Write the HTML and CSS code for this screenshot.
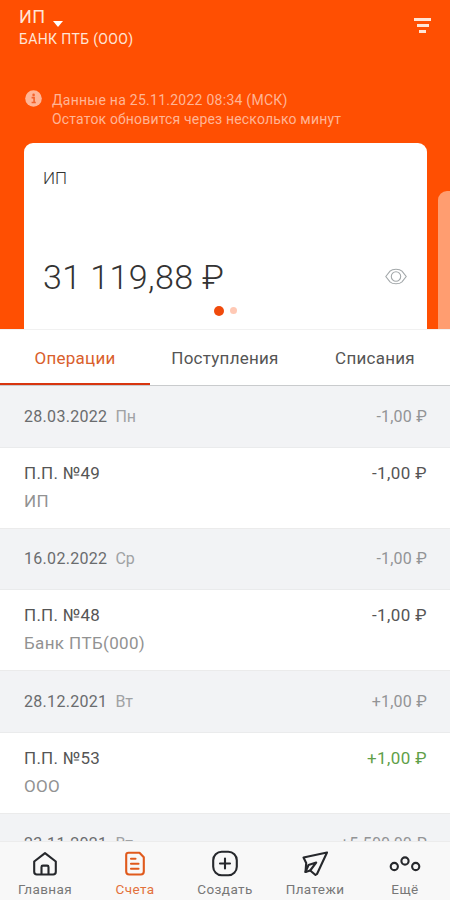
FILE: index.html
```html
<!DOCTYPE html>
<html lang="ru">
<head>
	<meta charset="utf-8">
	<meta name="viewport" content="width=device-width, initial-scale=1">
	<title>Счета</title>
	<link rel="stylesheet" href="styles.css">
</head>
<body>
	<div class="app">
		<header class="header">
			<div class="top">
				<div class="company">
					<div class="company-name"><span>ИП</span><i class="arrow"></i></div>
					<div class="bank">БАНК ПТБ (ООО)</div>
				</div>
				<div class="filter"><i></i><i></i><i></i></div>
			</div>
			<div class="notice">
				<svg width="17" height="17" viewBox="0 0 17 17">
					<circle cx="8.5" cy="8.5" r="8.3" fill="#ffb596"/>
					<circle cx="8.6" cy="4.9" r="1.3" fill="#f2622c"/>
					<path d="M6.6 7.6h2.5v4.8M6.6 12.5h4.2" fill="none" stroke="#f2622c" stroke-width="1.6"/>
				</svg>
				<div class="notice-text">
					<p class="notice-date">Данные на 25.11.2022 08:34 (МСК)</p>
					<p class="notice-rest">Остаток обновится через несколько минут</p>
				</div>
			</div>
			<div class="cards">
				<div class="card">
					<div class="card-name">ИП</div>
					<div class="card-row">
						<span class="balance">31 119,88 ₽</span>
						<svg width="22" height="17" viewBox="0 0 22 17" fill="none" stroke="#a3a8aa" stroke-width="1.1">
							<path d="M.8 8.5L5 3.200Q7 1.200 11 1.200t6 2l4.200 5.300-4.200 5.300q-2 2-6 2t-6-2z"/>
							<circle cx="11" cy="8.500" r="4.700"/>
						</svg>
					</div>
					<div class="dots"><i class="current"></i><i></i></div>
				</div>
				<div class="card-next"></div>
			</div>
		</header>

		<div class="tabs">
			<div class="tab current">Операции</div>
			<div class="tab">Поступления</div>
			<div class="tab">Списания</div>
		</div>

		<main class="list">
			<div class="day"><span class="date">28.03.2022</span><span class="week">Пн</span><span class="total">-1,00 ₽</span></div>
			<div class="item">
				<div class="item-row"><span class="doc">П.П. №49</span><span class="sum">-1,00 ₽</span></div>
				<div class="who">ИП</div>
			</div>
			<div class="day"><span class="date">16.02.2022</span><span class="week">Ср</span><span class="total">-1,00 ₽</span></div>
			<div class="item">
				<div class="item-row"><span class="doc">П.П. №48</span><span class="sum">-1,00 ₽</span></div>
				<div class="who">Банк ПТБ(000)</div>
			</div>
			<div class="day"><span class="date">28.12.2021</span><span class="week">Вт</span><span class="total">+1,00 ₽</span></div>
			<div class="item">
				<div class="item-row"><span class="doc">П.П. №53</span><span class="sum plus">+1,00 ₽</span></div>
				<div class="who">ООО</div>
			</div>
			<div class="day"><span class="date">23.11.2021</span><span class="week">Вт</span><span class="total">+5 500,00 ₽</span></div>
		</main>

		<nav class="nav">
			<div class="nav-item">
				<svg width="28" height="28" viewBox="0 0 28 28">
					<path d="M3.200 11.500L14 3.200l10.800 8.300v10.300q0 2.700-2.700 2.700H5.900q-2.700 0-2.700-2.700z"/>
					<path d="M10.500 24v-7q0-1.400 1.400-1.400h4.200q1.400 0 1.400 1.400v7"/>
				</svg>
				<span>Главная</span>
			</div>
			<div class="nav-item current">
				<svg width="28" height="28" viewBox="0 0 28 28">
					<path d="M7.500 2.700h11l4.300 4.500v14.300q0 3-3 3H8.200q-3 0-3-3V5q0-2.300 2.300-2.300z"/>
					<path d="M10 8.700H14.500M10 13.700h7.500M10 18.700h7.500"/>
				</svg>
				<span>Счета</span>
			</div>
			<div class="nav-item">
				<svg width="28" height="28" viewBox="0 0 28 28">
					<rect x="2.200" y="1.700" width="23.600" height="23.600" rx="8.500"/>
					<path d="M14 8.500v10M9 13.500h10"/>
				</svg>
				<span>Создать</span>
			</div>
			<div class="nav-item">
				<svg width="28" height="28" viewBox="0 0 28 28">
					<path d="M26 2.500L2.500 7.500 5.200 13 4.500 22l4.700-1.500 5.300 4.500 1.500-1z"/>
					<path d="M4.500 22l3-7L15.200 12.500 9.200 20.500"/>
				</svg>
				<span>Платежи</span>
			</div>
			<div class="nav-item">
				<svg width="32" height="28" viewBox="0 0 32 28">
					<circle cx="5.300" cy="16.500" r="3.600"/>
					<circle cx="16" cy="11" r="3.600"/>
					<circle cx="26.700" cy="16.500" r="3.600"/>
				</svg>
				<span>Ещё</span>
			</div>
		</nav>
	</div>
</body>
</html>
```

FILE: styles.css
```css
* {margin: 0; padding: 0; box-sizing: border-box;}
body {
	font-family: Roboto, "Noto Sans", sans-serif;
	color: #555;
	background: #fff;
}
svg {
	display: block;
	flex: none;
}
.app {
	display: flex;
	flex-direction: column;
	height: 900px;
	overflow: hidden;
}

/* header */
.header {
	height: 329px;
	background: #ff4f02;
	color: #ffe5d6;
	flex: none;
}
.top {
	display: flex;
	justify-content: space-between;
	height: 90px;
	padding: 6px 19px 0;
}
.company-name {
	display: flex;
	align-items: flex-end;
	height: 21px;
	font-size: 18px;
	line-height: 21px;
	letter-spacing: .3px;
}
.arrow {
	margin: 0 0 0 8px;
	border: 5px solid transparent;
	border-top: 6px solid #fff;
	border-bottom: 0;
}
.bank {
	margin-top: 4px;
	font-size: 14px;
	line-height: 16px;
	letter-spacing: .35px;
}
.filter {
	display: flex;
	flex-direction: column;
	align-items: center;
	gap: 3px;
	width: 17px;
	padding-top: 12px;
}
.filter i {
	width: 17px;
	height: 3px;
	background: #ffe5d6;
}
.filter i:nth-child(2) {width: 12px;}
.filter i:nth-child(3) {width: 7px;}
.notice {
	display: flex;
	gap: 10px;
	height: 53px;
	padding-left: 25px;
	color: #ffb596;
	font-size: 14px;
	line-height: 19px;
	white-space: nowrap;
}
.notice-text {padding-top: 1px;}
.notice-date {letter-spacing: .26px;}
.notice-rest {letter-spacing: .17px;}

/* cards */
.cards {
	display: flex;
	justify-content: space-between;
	align-items: flex-end;
	height: 186px;
	padding-left: 24px;
	overflow: hidden;
}
.card {
	width: 403px;
	height: 186px;
	padding: 25px 20px 0 19px;
	border-radius: 9px 9px 0 0;
	background: #fff;
	color: #333;
}
.card-name {
	font-size: 17px;
	font-weight: 300;
	line-height: 20px;
}
.card-row {
	display: flex;
	justify-content: space-between;
	align-items: center;
	margin-top: 69px;
}
.card-row svg {margin-top: -2px;}
.balance {
	font-size: 34px;
	font-weight: 300;
	line-height: 40px;
	letter-spacing: .4px;
	white-space: nowrap;
}
.dots {
	display: flex;
	justify-content: center;
	align-items: center;
	gap: 6px;
	margin-top: 8px;
	height: 11px;
}
.dots i {
	width: 7px;
	height: 7px;
	border-radius: 50%;
	background: #ffc9b5;
}
.dots .current {
	width: 10px;
	height: 10px;
	background: #f04a0c;
}
.card-next {
	width: 12px;
	height: 138px;
	border-radius: 9px 0 0 0;
	background: #ff9d70;
}

/* tabs */
.tabs {
	display: flex;
	flex: none;
	height: 57px;
	border-top: 1px solid #f1f1f1;
	border-bottom: 1px solid #c9cbcd;
	background: #fff;
}
.tab {
	flex: 1;
	height: 55px;
	text-align: center;
	font-size: 17px;
	line-height: 56px;
	letter-spacing: .25px;
	white-space: nowrap;
}
.tab.current {
	color: #d9602c;
	border-bottom: 2px solid #d8350f;
}

/* operations */
.list {
	flex: 1;
	min-height: 0;
	overflow: hidden;
}
.day {
	display: flex;
	align-items: center;
	height: 61.500px;
	padding: 0 23px 0 24px;
	background: #f2f3f5;
	border-bottom: 1px solid #eaebec;
	font-size: 16px;
	color: #6a6c6e;
}
.date {letter-spacing: .3px;}
.week {
	margin-left: 8px;
	color: #a0a2a4;
}
.total {
	margin-left: auto;
	color: #929496;
	letter-spacing: .2px;
}
.item {
	height: 81px;
	padding: 15px 23px 0 24px;
	border-bottom: 1px solid #ebebeb;
	font-size: 17px;
	line-height: 20px;
}
.item-row {
	display: flex;
	justify-content: space-between;
}
.doc {letter-spacing: .25px;}
.sum {letter-spacing: .4px;}
.sum.plus {color: #5f9f49;}
.who {
	margin-top: 8px;
	color: #929292;
	letter-spacing: .35px;
}

/* bottom menu */
.nav {
	display: flex;
	flex: none;
	height: 59px;
	border-top: 1px solid #ececec;
	background: #f8f8f8;
}
.nav-item {
	display: flex;
	flex: 1;
	flex-direction: column;
	align-items: center;
	padding-top: 8px;
	font-size: 13.500px;
	line-height: 16px;
	letter-spacing: .4px;
	color: #777;
}
.nav-item svg {
	margin-bottom: 3px;
	fill: none;
	stroke: #26282c;
	stroke-width: 2.100;
	stroke-linejoin: round;
	stroke-linecap: round;
}
.nav-item.current {color: #e3713b;}
.nav-item.current svg {stroke: #e05a1c;}
```
